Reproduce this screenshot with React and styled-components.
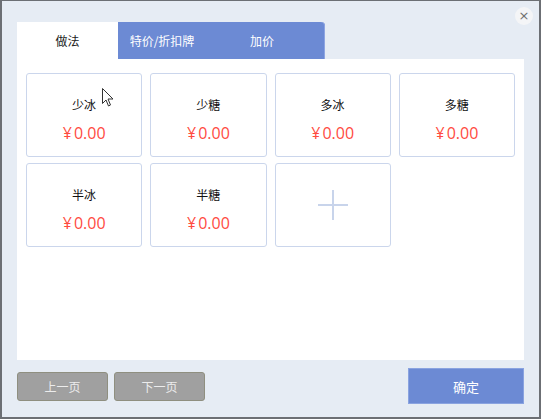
import React from "react";
import styled, { createGlobalStyle } from "styled-components";

const GlobalStyle = createGlobalStyle`
  html, body {
    margin: 0;
    padding: 0;
    background: #e6ecf4;
  }
  * {
    box-sizing: border-box;
  }
`;

const items = [
  { name: "少冰", price: "0.00" },
  { name: "少糖", price: "0.00" },
  { name: "多冰", price: "0.00" },
  { name: "多糖", price: "0.00" },
  { name: "半冰", price: "0.00" },
  { name: "半糖", price: "0.00" },
];

const App = () => {
  return (
    <>
      <GlobalStyle />
      <Window>
        <Close>×</Close>
        <Tabs>
          <Tab active>做法</Tab>
          <BlueTabs>
            <Tab width={94} shift={6}>特价/折扣牌</Tab>
            <Tab width={100}>加价</Tab>
          </BlueTabs>
        </Tabs>
        <Panel>
          <Cards>
            {items.map((j, index) => (
              <Card key={index}>
                <Name>{j.name}</Name>
                <Price>
                  <Yen>¥</Yen>
                  {j.price}
                </Price>
              </Card>
            ))}
            <Card>
              <Plus />
            </Card>
          </Cards>
          <Cursor width="12" height="19" viewBox="0 0 12 19">
            <path
              d="M0.5 0.5 L0.5 15.5 L4 12 L6.5 18 L8.5 17 L6 11 L11 11 Z"
              fill="#fff"
              stroke="#333"
              strokeWidth="1"
              strokeLinejoin="round"
            />
          </Cursor>
        </Panel>
        <Footer>
          <Pager>
            <GrayButton>上一页</GrayButton>
            <GrayButton>下一页</GrayButton>
          </Pager>
          <OkButton>确定</OkButton>
        </Footer>
      </Window>
    </>
  );
};

const Window = styled.div`
  position: relative;
  width: 541px;
  height: 419px;
  background: #e6ecf4;
  border: 2px solid #6c6f74;
  border-top-width: 1px;
  padding: 21px 15px 0 15px;
  display: flex;
  flex-direction: column;
  font-family: "Noto Sans CJK SC", sans-serif;
`;

const Close = styled.div`
  position: absolute;
  top: 6px;
  right: 6px;
  width: 18px;
  height: 18px;
  border-radius: 50%;
  background: #f4f5f7;
  color: #707070;
  font-family: "DejaVu Sans", sans-serif;
  font-size: 13px;
  line-height: 18px;
  text-align: center;
`;

const Tabs = styled.div`
  display: flex;
  height: 37px;
`;

const BlueTabs = styled.div`
  display: flex;
  width: 207px;
  background: #6c8ad4;
  border-radius: 0 4px 0 0;
  box-shadow: inset -1px 0 0 #8ea5e2;
`;

const Tab = styled.div`
  width: ${(p) => (p.width ? p.width + "px" : "101px")};
  padding-right: ${(p) => (p.shift ? p.shift + "px" : "0")};
  display: flex;
  align-items: center;
  justify-content: center;
  font-size: 12px;
  background: ${(p) => (p.active ? "#ffffff" : "transparent")};
  color: ${(p) => (p.active ? "#1a1a1a" : "#ffffff")};
`;

const Panel = styled.div`
  position: relative;
  height: 301px;
  background: #ffffff;
  padding: 14px 9px;
`;

const Cards = styled.div`
  display: grid;
  grid-template-columns: repeat(4, 1fr);
  grid-auto-rows: 84px;
  column-gap: 8px;
  row-gap: 6px;
`;

const Card = styled.div`
  border: 1px solid #cbd6ec;
  border-radius: 3px;
  display: flex;
  flex-direction: column;
  align-items: center;
  justify-content: center;
  padding-top: 10px;
`;

const Name = styled.div`
  font-size: 12px;
  color: #111;
  line-height: 16px;
`;

const Price = styled.div`
  margin-top: 10px;
  font-family: "Open Sans", "Noto Sans CJK SC", sans-serif;
  font-size: 16px;
  line-height: 20px;
  color: #ff4b3f;
`;

const Yen = styled.span`
  margin-right: 2px;
`;

const Plus = styled.div`
  position: relative;
  width: 30px;
  height: 30px;
  margin-top: -10px;
  &::before,
  &::after {
    content: "";
    position: absolute;
    background: #c8d4eb;
  }
  &::before {
    left: 14px;
    top: 0;
    width: 2px;
    height: 30px;
  }
  &::after {
    left: 0;
    top: 14px;
    width: 30px;
    height: 2px;
  }
`;

const Cursor = styled.svg`
  position: absolute;
  left: 85px;
  top: 29px;
`;

const Footer = styled.div`
  display: flex;
  justify-content: space-between;
  align-items: center;
  margin-top: 8px;
`;

const Pager = styled.div`
  display: flex;
  gap: 6px;
`;

const GrayButton = styled.div`
  width: 91px;
  height: 29px;
  background: #a0a0a0;
  border: 1px solid #8f8f80;
  border-radius: 3px;
  color: #ececec;
  font-size: 12px;
  display: flex;
  align-items: center;
  justify-content: center;
`;

const OkButton = styled.div`
  width: 116px;
  height: 36px;
  background: #6c8ad4;
  border: 1px solid #8aa3e0;
  color: #ffffff;
  font-size: 13px;
  display: flex;
  align-items: center;
  justify-content: center;
`;

export default App;
